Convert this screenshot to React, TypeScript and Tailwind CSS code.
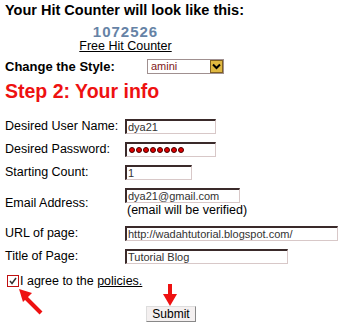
import React from 'react';

const font = { fontFamily: '"Liberation Sans", Arial, sans-serif' };

const Field = ({ value, width, password }: { value: string; width: string; password?: boolean }) => (
  <div
    className={`h-[15px] ${width} border-t-2 border-l-2 border-b border-r border-t-[#3a2a2a] border-l-[#3a2a2a] border-b-[#d8c8c8] border-r-[#d8c8c8] bg-white flex items-center pl-[1px] text-[11px] text-[#333] leading-none overflow-hidden`}
  >
    {password ? (
      <span className="flex gap-[1px] ml-[1px]">
        {Array.from({ length: 8 }).map((_, i) => (
          <span key={i} className="w-[6px] h-[6px] rounded-full bg-[#e00000] border border-[#400]" />
        ))}
      </span>
    ) : (
      value
    )}
  </div>
);

const rows = [
  { label: 'Desired User Name:', value: 'dya21', width: 'w-[91px]' },
  { label: 'Desired Password:', value: '', width: 'w-[91px]', password: true },
  { label: 'Starting Count:', value: '1', width: 'w-[67px]' },
];

export default function App() {
  return (
    <div className="relative w-[340px] h-[328px] bg-white text-black overflow-hidden" style={font}>
      <div className="pl-[5px] pt-[2px]">
        <h1 className="text-[14.5px] font-bold leading-[16px]">Your Hit Counter will look like this:</h1>
        <div className="w-[241px] flex flex-col items-center mt-[7px]">
          <div className="text-[15px] font-bold text-[#6683a6] leading-[13px] tracking-[1px]">1072526</div>
          <a className="text-[12.5px] underline leading-[15px] mt-[1px]">Free Hit Counter</a>
        </div>
        <div className="flex items-center mt-[5px] h-[15px]">
          <span className="w-[142px] text-[13px] font-semibold">Change the Style:</span>
          <div className="flex h-[15px] w-[77px] border border-[#a09090] bg-white">
            <span className="flex-1 text-[11px] text-[#802020] pl-[3px] leading-[13px]">amini</span>
            <span className="w-[13px] h-[13px] bg-[#e0b840] border border-[#806020] flex items-center justify-center">
              <svg width="9" height="7" viewBox="0 0 9 7">
                <path d="M1 1.5 L4.5 5 L8 1.5" stroke="#000" strokeWidth="2" fill="none" />
              </svg>
            </span>
          </div>
        </div>
        <h2 className="text-[19.5px] font-bold text-[#ee1111] leading-[22px] mt-[6px]">Step 2: Your info</h2>

        <div className="flex flex-col gap-[8px] mt-[17px] text-[12.5px]">
          {rows.map((r) => (
            <div key={r.label} className="flex items-center h-[15px]">
              <span className="w-[120px]">{r.label}</span>
              <Field value={r.value} width={r.width} password={r.password} />
            </div>
          ))}
          <div className="flex items-center">
            <span className="w-[120px]">Email Address:</span>
            <div className="flex flex-col">
              <Field value="dya21@gmail.com" width="w-[115px]" />
              <span className="leading-[15px] pl-[2px]">(email will be verified)</span>
            </div>
          </div>
          <div className="flex items-center h-[15px]">
            <span className="w-[120px]">URL of page:</span>
            <Field value="http://wadahtutorial.blogspot.com/" width="w-[213px]" />
          </div>
          <div className="flex items-center h-[15px]">
            <span className="w-[120px]">Title of Page:</span>
            <Field value="Tutorial Blog" width="w-[163px]" />
          </div>
          <div className="flex items-center h-[14px] mt-[2px] pl-[2px]">
            <span className="w-[12px] h-[12px] border border-[#c01010] bg-white flex items-center justify-center">
              <svg width="10" height="10" viewBox="0 0 10 10">
                <path d="M2 5 L4 7.5 L8 2" stroke="#333" strokeWidth="1.5" fill="none" />
              </svg>
            </span>
            <span className="ml-[1px]">
              I agree to the <span className="underline">policies.</span>
            </span>
          </div>
          <div className="flex justify-center w-[340px] -ml-[5px] mt-[10px] pl-[2px]">
            <button className="h-[16px] px-[5px] text-[12px] leading-none border border-[#888] border-t-[#ddd] border-l-[#ddd] bg-[#f4f0f0]">
              Submit
            </button>
          </div>
        </div>
      </div>

      <svg className="absolute left-[16px] top-[285px]" width="30" height="32" viewBox="0 0 30 32">
        <path d="M25 28 L9 12" stroke="#ee1111" strokeWidth="4" />
        <polygon points="3,4 16,8 7,17" fill="#ee1111" />
      </svg>
      <svg className="absolute left-[162px] top-[284px]" width="16" height="23" viewBox="0 0 16 23">
        <path d="M8 0 L8 13" stroke="#ee1111" strokeWidth="4" />
        <polygon points="1,10 15,10 8,22" fill="#ee1111" />
      </svg>
    </div>
  );
}
